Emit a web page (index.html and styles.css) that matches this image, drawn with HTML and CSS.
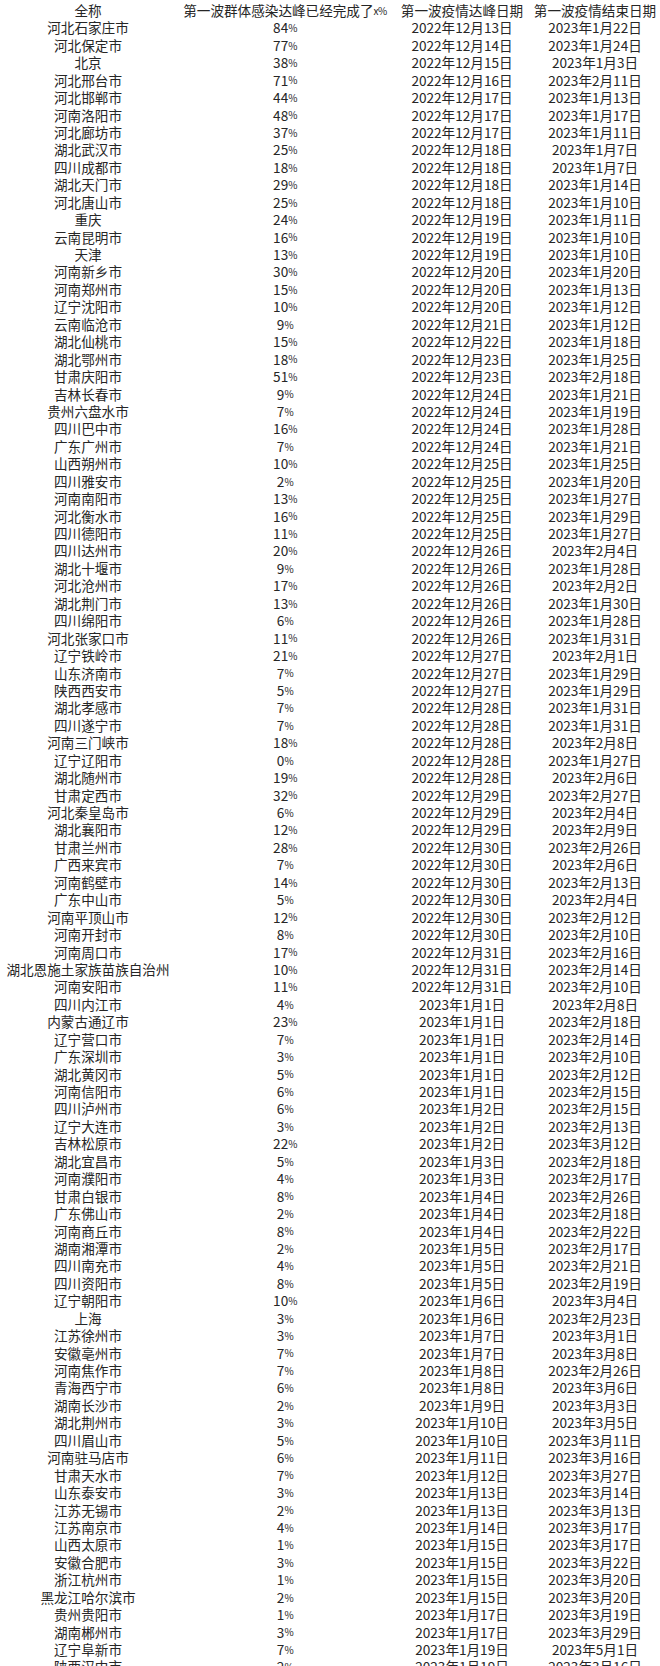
FILE: index.html
```html
<!DOCTYPE html>
<html lang="zh">
<head>
<meta charset="utf-8">
<link rel="stylesheet" href="styles.css">
</head>
<body>
<div class="sheet">
<div class="row head"><span>全称</span><span>第一波群体感染达峰已经完成了<i>x%</i></span><span>第一波疫情达峰日期</span><span>第一波疫情结束日期</span></div>
<div class="row"><span>河北石家庄市</span><span>84<i>%</i></span><span>2022年12月13日</span><span>2023年1月22日</span></div>
<div class="row"><span>河北保定市</span><span>77<i>%</i></span><span>2022年12月14日</span><span>2023年1月24日</span></div>
<div class="row"><span>北京</span><span>38<i>%</i></span><span>2022年12月15日</span><span>2023年1月3日</span></div>
<div class="row"><span>河北邢台市</span><span>71<i>%</i></span><span>2022年12月16日</span><span>2023年2月11日</span></div>
<div class="row"><span>河北邯郸市</span><span>44<i>%</i></span><span>2022年12月17日</span><span>2023年1月13日</span></div>
<div class="row"><span>河南洛阳市</span><span>48<i>%</i></span><span>2022年12月17日</span><span>2023年1月17日</span></div>
<div class="row"><span>河北廊坊市</span><span>37<i>%</i></span><span>2022年12月17日</span><span>2023年1月11日</span></div>
<div class="row"><span>湖北武汉市</span><span>25<i>%</i></span><span>2022年12月18日</span><span>2023年1月7日</span></div>
<div class="row"><span>四川成都市</span><span>18<i>%</i></span><span>2022年12月18日</span><span>2023年1月7日</span></div>
<div class="row"><span>湖北天门市</span><span>29<i>%</i></span><span>2022年12月18日</span><span>2023年1月14日</span></div>
<div class="row"><span>河北唐山市</span><span>25<i>%</i></span><span>2022年12月18日</span><span>2023年1月10日</span></div>
<div class="row"><span>重庆</span><span>24<i>%</i></span><span>2022年12月19日</span><span>2023年1月11日</span></div>
<div class="row"><span>云南昆明市</span><span>16<i>%</i></span><span>2022年12月19日</span><span>2023年1月10日</span></div>
<div class="row"><span>天津</span><span>13<i>%</i></span><span>2022年12月19日</span><span>2023年1月10日</span></div>
<div class="row"><span>河南新乡市</span><span>30<i>%</i></span><span>2022年12月20日</span><span>2023年1月20日</span></div>
<div class="row"><span>河南郑州市</span><span>15<i>%</i></span><span>2022年12月20日</span><span>2023年1月13日</span></div>
<div class="row"><span>辽宁沈阳市</span><span>10<i>%</i></span><span>2022年12月20日</span><span>2023年1月12日</span></div>
<div class="row"><span>云南临沧市</span><span>9<i>%</i></span><span>2022年12月21日</span><span>2023年1月12日</span></div>
<div class="row"><span>湖北仙桃市</span><span>15<i>%</i></span><span>2022年12月22日</span><span>2023年1月18日</span></div>
<div class="row"><span>湖北鄂州市</span><span>18<i>%</i></span><span>2022年12月23日</span><span>2023年1月25日</span></div>
<div class="row"><span>甘肃庆阳市</span><span>51<i>%</i></span><span>2022年12月23日</span><span>2023年2月18日</span></div>
<div class="row"><span>吉林长春市</span><span>9<i>%</i></span><span>2022年12月24日</span><span>2023年1月21日</span></div>
<div class="row"><span>贵州六盘水市</span><span>7<i>%</i></span><span>2022年12月24日</span><span>2023年1月19日</span></div>
<div class="row"><span>四川巴中市</span><span>16<i>%</i></span><span>2022年12月24日</span><span>2023年1月28日</span></div>
<div class="row"><span>广东广州市</span><span>7<i>%</i></span><span>2022年12月24日</span><span>2023年1月21日</span></div>
<div class="row"><span>山西朔州市</span><span>10<i>%</i></span><span>2022年12月25日</span><span>2023年1月25日</span></div>
<div class="row"><span>四川雅安市</span><span>2<i>%</i></span><span>2022年12月25日</span><span>2023年1月20日</span></div>
<div class="row"><span>河南南阳市</span><span>13<i>%</i></span><span>2022年12月25日</span><span>2023年1月27日</span></div>
<div class="row"><span>河北衡水市</span><span>16<i>%</i></span><span>2022年12月25日</span><span>2023年1月29日</span></div>
<div class="row"><span>四川德阳市</span><span>11<i>%</i></span><span>2022年12月25日</span><span>2023年1月27日</span></div>
<div class="row"><span>四川达州市</span><span>20<i>%</i></span><span>2022年12月26日</span><span>2023年2月4日</span></div>
<div class="row"><span>湖北十堰市</span><span>9<i>%</i></span><span>2022年12月26日</span><span>2023年1月28日</span></div>
<div class="row"><span>河北沧州市</span><span>17<i>%</i></span><span>2022年12月26日</span><span>2023年2月2日</span></div>
<div class="row"><span>湖北荆门市</span><span>13<i>%</i></span><span>2022年12月26日</span><span>2023年1月30日</span></div>
<div class="row"><span>四川绵阳市</span><span>6<i>%</i></span><span>2022年12月26日</span><span>2023年1月28日</span></div>
<div class="row"><span>河北张家口市</span><span>11<i>%</i></span><span>2022年12月26日</span><span>2023年1月31日</span></div>
<div class="row"><span>辽宁铁岭市</span><span>21<i>%</i></span><span>2022年12月27日</span><span>2023年2月1日</span></div>
<div class="row"><span>山东济南市</span><span>7<i>%</i></span><span>2022年12月27日</span><span>2023年1月29日</span></div>
<div class="row"><span>陕西西安市</span><span>5<i>%</i></span><span>2022年12月27日</span><span>2023年1月29日</span></div>
<div class="row"><span>湖北孝感市</span><span>7<i>%</i></span><span>2022年12月28日</span><span>2023年1月31日</span></div>
<div class="row"><span>四川遂宁市</span><span>7<i>%</i></span><span>2022年12月28日</span><span>2023年1月31日</span></div>
<div class="row"><span>河南三门峡市</span><span>18<i>%</i></span><span>2022年12月28日</span><span>2023年2月8日</span></div>
<div class="row"><span>辽宁辽阳市</span><span>0<i>%</i></span><span>2022年12月28日</span><span>2023年1月27日</span></div>
<div class="row"><span>湖北随州市</span><span>19<i>%</i></span><span>2022年12月28日</span><span>2023年2月6日</span></div>
<div class="row"><span>甘肃定西市</span><span>32<i>%</i></span><span>2022年12月29日</span><span>2023年2月27日</span></div>
<div class="row"><span>河北秦皇岛市</span><span>6<i>%</i></span><span>2022年12月29日</span><span>2023年2月4日</span></div>
<div class="row"><span>湖北襄阳市</span><span>12<i>%</i></span><span>2022年12月29日</span><span>2023年2月9日</span></div>
<div class="row"><span>甘肃兰州市</span><span>28<i>%</i></span><span>2022年12月30日</span><span>2023年2月26日</span></div>
<div class="row"><span>广西来宾市</span><span>7<i>%</i></span><span>2022年12月30日</span><span>2023年2月6日</span></div>
<div class="row"><span>河南鹤壁市</span><span>14<i>%</i></span><span>2022年12月30日</span><span>2023年2月13日</span></div>
<div class="row"><span>广东中山市</span><span>5<i>%</i></span><span>2022年12月30日</span><span>2023年2月4日</span></div>
<div class="row"><span>河南平顶山市</span><span>12<i>%</i></span><span>2022年12月30日</span><span>2023年2月12日</span></div>
<div class="row"><span>河南开封市</span><span>8<i>%</i></span><span>2022年12月30日</span><span>2023年2月10日</span></div>
<div class="row"><span>河南周口市</span><span>17<i>%</i></span><span>2022年12月31日</span><span>2023年2月16日</span></div>
<div class="row"><span>湖北恩施土家族苗族自治州</span><span>10<i>%</i></span><span>2022年12月31日</span><span>2023年2月14日</span></div>
<div class="row"><span>河南安阳市</span><span>11<i>%</i></span><span>2022年12月31日</span><span>2023年2月10日</span></div>
<div class="row"><span>四川内江市</span><span>4<i>%</i></span><span>2023年1月1日</span><span>2023年2月8日</span></div>
<div class="row"><span>内蒙古通辽市</span><span>23<i>%</i></span><span>2023年1月1日</span><span>2023年2月18日</span></div>
<div class="row"><span>辽宁营口市</span><span>7<i>%</i></span><span>2023年1月1日</span><span>2023年2月14日</span></div>
<div class="row"><span>广东深圳市</span><span>3<i>%</i></span><span>2023年1月1日</span><span>2023年2月10日</span></div>
<div class="row"><span>湖北黄冈市</span><span>5<i>%</i></span><span>2023年1月1日</span><span>2023年2月12日</span></div>
<div class="row"><span>河南信阳市</span><span>6<i>%</i></span><span>2023年1月1日</span><span>2023年2月15日</span></div>
<div class="row"><span>四川泸州市</span><span>6<i>%</i></span><span>2023年1月2日</span><span>2023年2月15日</span></div>
<div class="row"><span>辽宁大连市</span><span>3<i>%</i></span><span>2023年1月2日</span><span>2023年2月13日</span></div>
<div class="row"><span>吉林松原市</span><span>22<i>%</i></span><span>2023年1月2日</span><span>2023年3月12日</span></div>
<div class="row"><span>湖北宜昌市</span><span>5<i>%</i></span><span>2023年1月3日</span><span>2023年2月18日</span></div>
<div class="row"><span>河南濮阳市</span><span>4<i>%</i></span><span>2023年1月3日</span><span>2023年2月17日</span></div>
<div class="row"><span>甘肃白银市</span><span>8<i>%</i></span><span>2023年1月4日</span><span>2023年2月26日</span></div>
<div class="row"><span>广东佛山市</span><span>2<i>%</i></span><span>2023年1月4日</span><span>2023年2月18日</span></div>
<div class="row"><span>河南商丘市</span><span>8<i>%</i></span><span>2023年1月4日</span><span>2023年2月22日</span></div>
<div class="row"><span>湖南湘潭市</span><span>2<i>%</i></span><span>2023年1月5日</span><span>2023年2月17日</span></div>
<div class="row"><span>四川南充市</span><span>4<i>%</i></span><span>2023年1月5日</span><span>2023年2月21日</span></div>
<div class="row"><span>四川资阳市</span><span>8<i>%</i></span><span>2023年1月5日</span><span>2023年2月19日</span></div>
<div class="row"><span>辽宁朝阳市</span><span>10<i>%</i></span><span>2023年1月6日</span><span>2023年3月4日</span></div>
<div class="row"><span>上海</span><span>3<i>%</i></span><span>2023年1月6日</span><span>2023年2月23日</span></div>
<div class="row"><span>江苏徐州市</span><span>3<i>%</i></span><span>2023年1月7日</span><span>2023年3月1日</span></div>
<div class="row"><span>安徽亳州市</span><span>7<i>%</i></span><span>2023年1月7日</span><span>2023年3月8日</span></div>
<div class="row"><span>河南焦作市</span><span>7<i>%</i></span><span>2023年1月8日</span><span>2023年2月26日</span></div>
<div class="row"><span>青海西宁市</span><span>6<i>%</i></span><span>2023年1月8日</span><span>2023年3月6日</span></div>
<div class="row"><span>湖南长沙市</span><span>2<i>%</i></span><span>2023年1月9日</span><span>2023年3月3日</span></div>
<div class="row"><span>湖北荆州市</span><span>3<i>%</i></span><span>2023年1月10日</span><span>2023年3月5日</span></div>
<div class="row"><span>四川眉山市</span><span>5<i>%</i></span><span>2023年1月10日</span><span>2023年3月11日</span></div>
<div class="row"><span>河南驻马店市</span><span>6<i>%</i></span><span>2023年1月11日</span><span>2023年3月16日</span></div>
<div class="row"><span>甘肃天水市</span><span>7<i>%</i></span><span>2023年1月12日</span><span>2023年3月27日</span></div>
<div class="row"><span>山东泰安市</span><span>3<i>%</i></span><span>2023年1月13日</span><span>2023年3月14日</span></div>
<div class="row"><span>江苏无锡市</span><span>2<i>%</i></span><span>2023年1月13日</span><span>2023年3月13日</span></div>
<div class="row"><span>江苏南京市</span><span>4<i>%</i></span><span>2023年1月14日</span><span>2023年3月17日</span></div>
<div class="row"><span>山西太原市</span><span>1<i>%</i></span><span>2023年1月15日</span><span>2023年3月17日</span></div>
<div class="row"><span>安徽合肥市</span><span>3<i>%</i></span><span>2023年1月15日</span><span>2023年3月22日</span></div>
<div class="row"><span>浙江杭州市</span><span>1<i>%</i></span><span>2023年1月15日</span><span>2023年3月20日</span></div>
<div class="row"><span>黑龙江哈尔滨市</span><span>2<i>%</i></span><span>2023年1月15日</span><span>2023年3月20日</span></div>
<div class="row"><span>贵州贵阳市</span><span>1<i>%</i></span><span>2023年1月17日</span><span>2023年3月19日</span></div>
<div class="row"><span>湖南郴州市</span><span>3<i>%</i></span><span>2023年1月17日</span><span>2023年3月29日</span></div>
<div class="row"><span>辽宁阜新市</span><span>7<i>%</i></span><span>2023年1月19日</span><span>2023年5月1日</span></div>
<div class="row"><span>陕西汉中市</span><span>2<i>%</i></span><span>2023年1月19日</span><span>2023年3月16日</span></div>
</div>
</body>
</html>
```
FILE: styles.css
```css
html, body {
  margin: 0;
  padding: 0;
  background: #ffffff;
}
body {
  height: 1666px;
  overflow: hidden;
}
.sheet {
  display: grid;
  grid-template-columns: 176px 218px 136px 130px;
  grid-auto-rows: 17.44px;
  padding-top: 2px;
  font-family: "Noto Sans CJK SC", "Noto Sans", sans-serif;
  font-size: 13.6px;
  color: #262626;
}
.row {
  display: contents;
}
.row span {
  display: flex;
  align-items: center;
  justify-content: center;
  white-space: nowrap;
  line-height: 1;
}
.row span i {
  font-style: normal;
  font-size: 10px;
  letter-spacing: -0.5px;
}
.head span {
  font-size: 13.6px;
}
```
